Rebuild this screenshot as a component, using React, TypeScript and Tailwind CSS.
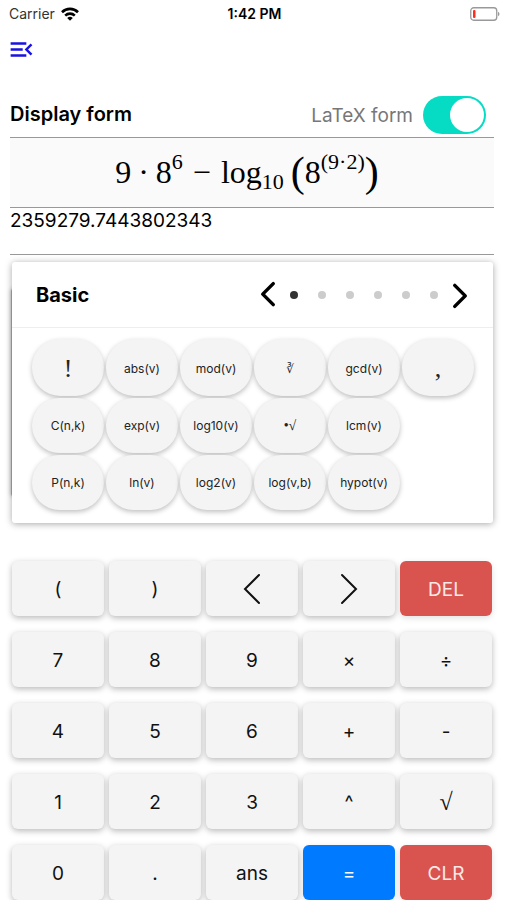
import React, { useState } from 'react';
import clsx from 'clsx';
import { MdMenuOpen } from 'react-icons/md';

type Variant = 'default' | 'danger' | 'primary';

interface Key {
  id: string;
  label: React.ReactNode;
  variant?: Variant;
}

interface FunctionKey {
  id: string;
  label: string;
  className?: string;
}

const Chevron = ({ flip = false, thick = false }: { flip?: boolean; thick?: boolean }) => (
  <svg
    viewBox="0 0 18 32"
    className={clsx(thick ? 'h-7 w-4' : 'h-8 w-[18px]', flip && 'rotate-180')}
    fill="none"
    stroke="currentColor"
    strokeWidth={thick ? 4 : 2}
    strokeLinecap="round"
    strokeLinejoin={thick ? 'round' : 'miter'}
    aria-hidden="true"
  >
    {thick ? <path d="M15 3 3 15l12 12" /> : <path d="M16 2 2 16l14 14" />}
  </svg>
);

const functionRows: FunctionKey[][] = [
  [
    { id: 'factorial', label: '!', className: "font-['Liberation_Serif',serif] text-[26px]" },
    { id: 'abs', label: 'abs(v)' },
    { id: 'mod', label: 'mod(v)' },
    { id: 'cbrt', label: '∛', className: "font-['DejaVu_Sans',sans-serif] text-xs" },
    { id: 'gcd', label: 'gcd(v)' },
    { id: 'comma', label: ',', className: "font-['Liberation_Serif',serif] text-[26px]" },
  ],
  [
    { id: 'combinations', label: 'C(n,k)' },
    { id: 'exp', label: 'exp(v)' },
    { id: 'log10', label: 'log10(v)' },
    { id: 'nroot', label: '•√', className: "font-['Liberation_Serif',serif] text-sm" },
    { id: 'lcm', label: 'lcm(v)' },
  ],
  [
    { id: 'permutations', label: 'P(n,k)' },
    { id: 'ln', label: 'ln(v)' },
    { id: 'log2', label: 'log2(v)' },
    { id: 'log', label: 'log(v,b)' },
    { id: 'hypot', label: 'hypot(v)' },
  ],
];

const keys: Key[] = [
  { id: 'open', label: '(' },
  { id: 'close', label: ')' },
  { id: 'left', label: <Chevron /> },
  { id: 'right', label: <Chevron flip /> },
  { id: 'DEL', label: 'DEL', variant: 'danger' },
  { id: '7', label: '7' },
  { id: '8', label: '8' },
  { id: '9', label: '9' },
  { id: 'times', label: '×' },
  { id: 'divide', label: '÷' },
  { id: '4', label: '4' },
  { id: '5', label: '5' },
  { id: '6', label: '6' },
  { id: 'plus', label: '+' },
  { id: 'minus', label: '-' },
  { id: '1', label: '1' },
  { id: '2', label: '2' },
  { id: '3', label: '3' },
  { id: 'power', label: '^' },
  { id: 'sqrt', label: <span className="font-['Liberation_Serif',serif] text-2xl">√</span> },
  { id: '0', label: '0' },
  { id: 'point', label: '.' },
  { id: 'ans', label: 'ans' },
  { id: 'equals', label: '=', variant: 'primary' },
  { id: 'CLR', label: 'CLR', variant: 'danger' },
];

const variants: Record<Variant, string> = {
  default: 'bg-[#f4f4f4] text-[#111] shadow-[0_2px_6px_rgba(0,0,0,0.28)]',
  danger: 'bg-[#d9534f] text-[#fbe9e8] shadow-[0_2px_6px_rgba(0,0,0,0.12)]',
  primary: 'bg-[#007aff] text-white shadow-[0_2px_6px_rgba(0,0,0,0.12)]',
};

const StatusBar = () => (
  <div className="grid h-7 grid-cols-3 items-center pl-[9px] pr-[7px] text-sm">
    <div className="flex items-center gap-[6px] text-[#333]">
      Carrier
      <svg viewBox="0 0 18 14" className="h-[14px] w-[18px]" fill="none" stroke="#000" strokeWidth="2.6" aria-hidden="true">
        <path d="M1 5.2a11.4 11.4 0 0 1 16 0" />
        <path d="M4.2 8.6a6.9 6.9 0 0 1 9.6 0" />
        <path d="M9 13.8 6.2 11a4 4 0 0 1 5.6 0z" fill="#000" stroke="none" />
      </svg>
    </div>
    <div className="text-center font-semibold">1:42 PM</div>
    <svg viewBox="0 0 30 14" className="h-[14px] w-[30px] justify-self-end" fill="none" aria-label="Battery low">
      <rect x="0.75" y="0.75" width="26" height="12.5" rx="3" stroke="#999" strokeWidth="1.3" />
      <rect x="3" y="3" width="2.5" height="8" rx="1" fill="#ff2d20" />
      <path d="M28 4.8c2 .8 2 3.6 0 4.4z" fill="#999" />
    </svg>
  </div>
);

const Formula = () => (
  <div className="flex h-[69px] items-center justify-center bg-[#fafafa] pb-[2px] pr-[10px] font-['Liberation_Serif',serif] text-[32px] leading-none">
    <span>9</span>
    <span className="mx-[7px]">·</span>
    <span>8</span>
    <sup className="top-0 pb-5 text-[22px] leading-none">6</sup>
    <span className="mx-[10px]">−</span>
    <span>log</span>
    <sub className="bottom-0 pt-5 text-[22px] leading-none">10</sub>
    <span className="ml-[7px] text-[42px] leading-none">(</span>
    <span>8</span>
    <sup className="top-0 pb-5 text-[22px] leading-none">(9·2)</sup>
    <span className="text-[42px] leading-none">)</span>
  </div>
);

const FunctionPanel = () => {
  const [page, setPage] = useState(0);
  const pages = 6;

  return (
    <section className="relative ml-[2px] mr-px mt-[7px]">
      {/* edge of the neighbouring page */}
      <div className="absolute -left-px bottom-[26px] top-[26px] w-2 rounded bg-[#aaa] shadow-[0_0_4px_rgba(0,0,0,0.3)]" />
      <div className="relative rounded-[3px] bg-white shadow-[0_1px_7px_rgba(0,0,0,0.35)]">
        <div className="flex h-[66px] items-center justify-between border-b border-[#eee] pl-6 pr-[25px]">
          <h2 className="text-xl font-bold">Basic</h2>
          <div className="flex items-center gap-[14px]">
            <button type="button" aria-label="Previous page" onClick={() => setPage(Math.max(0, page - 1))}>
              <Chevron thick />
            </button>
            <div className="flex gap-5">
              {Array.from({ length: pages }, (_, i) => (
                <span key={i} className={clsx('size-2 rounded-full', i === page ? 'bg-[#333]' : 'bg-[#ccc]')} />
              ))}
            </div>
            <button type="button" aria-label="Next page" onClick={() => setPage(Math.min(pages - 1, page + 1))}>
              <Chevron thick flip />
            </button>
          </div>
        </div>
        <div className="flex flex-col gap-[2px] pb-[13px] pl-5 pr-[19px] pt-[11px]">
          {functionRows.map((row, i) => (
            <div key={i} className="grid grid-cols-6 gap-[2px]">
              {row.map((fn) => (
                <button
                  key={fn.id}
                  type="button"
                  className={clsx(
                    'rounded-[28px] bg-[#f4f4f4] text-[#222] shadow-[0_2px_5px_rgba(0,0,0,0.25)]',
                    i === 0 ? 'h-[57px] pt-[2px]' : 'h-[55px]',
                    fn.className ?? 'text-xs'
                  )}
                >
                  {fn.label}
                </button>
              ))}
            </div>
          ))}
        </div>
      </div>
    </section>
  );
};

const App = () => {
  const [latex, setLatex] = useState(true);

  return (
    <div className="bg-white font-[Inter,sans-serif] text-black">
      <StatusBar />
      <main className="pl-[10px] pr-[13px]">
        <button type="button" aria-label="Open menu" className="-ml-[3px] mt-[7px] block text-[#1a12e0]">
          <MdMenuOpen className="size-[29px]" />
        </button>

        <div className="mt-8 flex h-[42px] items-start justify-between border-b border-[#999] pr-2">
          <h1 className="text-xl font-semibold leading-[37px]">Display form</h1>
          <label className="flex items-center gap-[10px] text-[19px] leading-[37px] text-[#777]">
            LaTeX form
            <input
              type="checkbox"
              role="switch"
              checked={latex}
              onChange={(e) => setLatex(e.target.checked)}
              className="peer sr-only"
            />
            <span className="flex h-[38px] w-[63px] items-center rounded-full bg-[#ccc] p-[2px] peer-checked:justify-end peer-checked:bg-[#06dcc4]">
              <span className="size-[34px] rounded-full bg-white" />
            </span>
          </label>
        </div>

        <Formula />
        <output className="block h-12 border-b border-t border-[#999] text-[19px] leading-[26px]">2359279.7443802343</output>

        <FunctionPanel />

        <div className="mx-[2px] mt-[38px] grid grid-cols-5 gap-x-[5px] gap-y-4">
          {keys.map((key) => (
            <button
              key={key.id}
              type="button"
              aria-label={key.id}
              className={clsx(
                'flex h-[55px] items-center justify-center rounded-md text-[19px]',
                typeof key.label === 'string' && 'pt-[3px]',
                variants[key.variant ?? 'default']
              )}
            >
              {key.label}
            </button>
          ))}
        </div>
      </main>
    </div>
  );
};

export default App;
